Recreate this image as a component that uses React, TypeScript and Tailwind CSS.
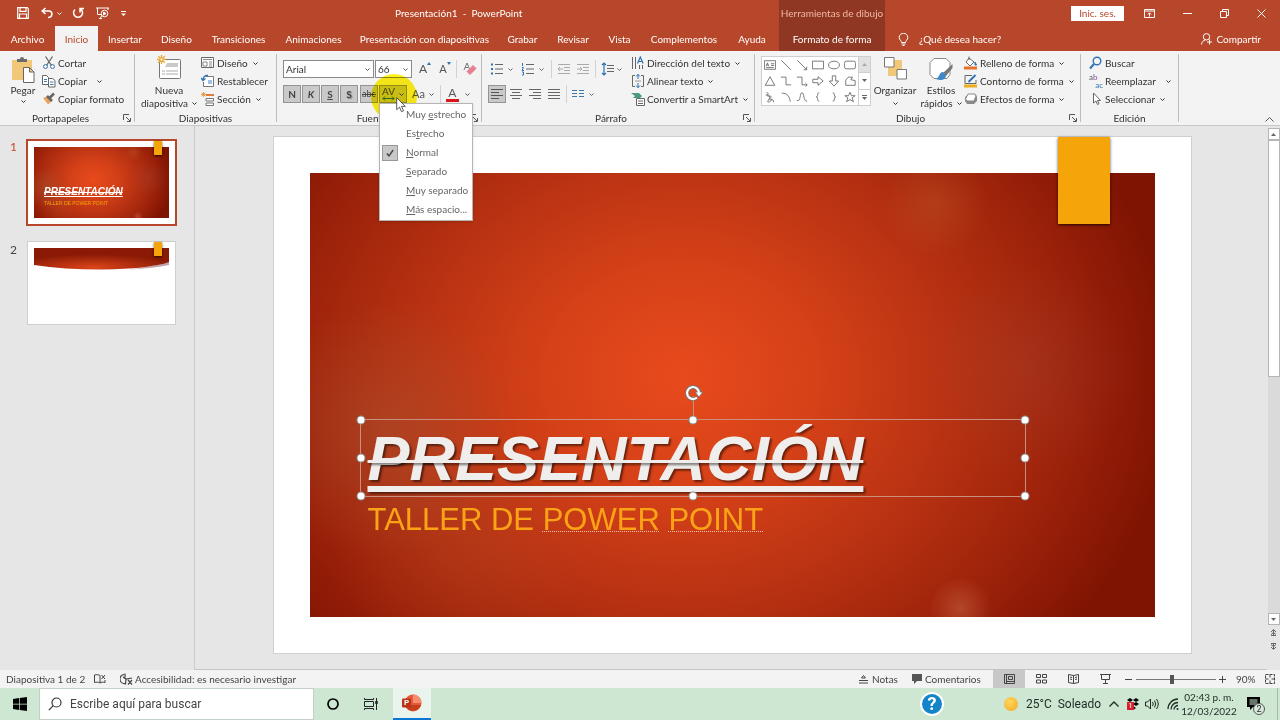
import React from 'react';

interface IconProps {
  children: React.ReactNode;
  size?: string;
  box?: string;
  className?: string;
}

const Icon: React.FC<IconProps> = ({ children, size = 'w-3.5 h-3.5', box = '0 0 14 14', className = '' }) => (
  <svg viewBox={box} className={`${size} shrink-0 ${className}`} fill="none" stroke="currentColor" strokeWidth="1" aria-hidden="true">
    {children}
  </svg>
);

const Chevron = ({ className = '' }: { className?: string }) => (
  <Icon size="w-[5px] h-[5px]" box="0 0 5 5" className={className}>
    <path d="M.5 1.5l2 2 2-2" />
  </Icon>
);

const Launcher = () => (
  <button type="button" title="Más opciones" className="w-3.5 flex justify-center text-[#555]">
    <Icon size="w-2 h-2" box="0 0 8 8">
      <path d="M.5 6V.5H6M3 3l4 4M7.5 4v3.5H4" />
    </Icon>
  </button>
);

const Divider = () => <span className="w-px h-[18px] bg-[#d2d2d2] shrink-0" />;

interface GroupProps {
  title: string;
  width: string;
  launcher?: boolean;
  children: React.ReactNode;
}

const Group: React.FC<GroupProps> = ({ title, width, launcher, children }) => (
  <section aria-label={title} className={`${width} shrink-0 flex flex-col border-r border-[#bdbdbd]`}>
    <div className="flex-1 flex items-start">{children}</div>
    <div className="flex items-center leading-[8px]">
      <span className="flex-1 text-center">{title}</span>
      {launcher && <Launcher />}
    </div>
  </section>
);

interface ItemProps {
  icon: React.ReactNode;
  label: string;
  arrow?: 'near' | 'far';
}

const Item: React.FC<ItemProps> = ({ icon, label, arrow }) => (
  <button type="button" className="flex items-center h-[18px] whitespace-nowrap">
    {icon}
    <span className="ml-0.5">{label}</span>
    {arrow && <Chevron className={arrow === 'far' ? 'ml-2.5' : 'ml-[5px]'} />}
  </button>
);

const TABS = [
  { label: 'Archivo', width: 'w-[55px]' },
  { label: 'Inicio', width: 'w-[43px]' },
  { label: 'Insertar', width: 'w-[54px]' },
  { label: 'Diseño', width: 'w-[49px]' },
  { label: 'Transiciones', width: 'w-[75px]' },
  { label: 'Animaciones', width: 'w-[75px]' },
  { label: 'Presentación con diapositivas', width: 'w-[147px]' },
  { label: 'Grabar', width: 'w-[49px]' },
  { label: 'Revisar', width: 'w-[52px]' },
  { label: 'Vista', width: 'w-[41px]' },
  { label: 'Complementos', width: 'w-[88px]' },
  { label: 'Ayuda', width: 'w-[48px]' },
];

const TitleBar = () => (
  <header className="flex bg-[#b7472a] text-white">
    <div className="w-[779px] shrink-0">
      <div className="flex items-center h-[26px]">
        <div className="flex items-center pl-[17px] w-[114px]">
          <button type="button" title="Guardar">
            <Icon size="w-3 h-3" box="0 0 12 12" className="block">
              <path d="M.7.7h9.6l1 1v9.6H.7zM3 .7v3.6h6V.7M2.500 11.300V7h7v4.3" strokeWidth="1.2" />
            </Icon>
          </button>
          <button type="button" title="Deshacer" className="ml-3">
            <Icon size="w-3 h-3" box="0 0 12 12" className="block">
              <path d="M4.5 1L1.2 4l3.3 3M1.2 4H8c4 0 4 6.5-1 6.5" strokeWidth="1.6" />
            </Icon>
          </button>
          <Chevron className="ml-1" />
          <button type="button" title="Rehacer" className="ml-2.5">
            <Icon size="w-3 h-3" box="0 0 12 12" className="block">
              <path d="M3 2.5A4.5 4.5 0 1 0 8.5 2M8 5.5V1.5h4" strokeWidth="1.5" />
            </Icon>
          </button>
          <button type="button" title="Presentación desde el principio" className="ml-3">
            <Icon size="w-[13px] h-3" box="0 0 13 12" className="block">
              <path d="M0 1h13M1.5 1v6.5H5M12 1v2M4 11.5l2-3M3 11.5h3" />
              <circle cx="8.5" cy="6.5" r="3.3" />
              <path d="M7.5 5v3L10 6.5z" fill="currentColor" />
            </Icon>
          </button>
        </div>
        <button type="button" title="Personalizar barra" className="ml-1.5">
          <Icon size="w-[7px] h-[7px]" box="0 0 7 7">
            <path d="M1 1.5h5" />
            <path d="M1 3.5h5L3.5 6z" fill="currentColor" stroke="none" />
          </Icon>
        </button>
        <h1 className="ml-[268px] whitespace-pre">Presentación1  -  PowerPoint</h1>
      </div>
      <nav className="flex h-[25px]">
        {TABS.map((tab) => (
          <button
            key={tab.label}
            type="button"
            className={`${tab.width} shrink-0 pt-px whitespace-nowrap text-center ${tab.label === 'Inicio' ? 'bg-[#f3f3f3] text-[#b7472a]' : ''}`}
          >
            {tab.label}
          </button>
        ))}
      </nav>
    </div>
    <div className="w-[106px] shrink-0 bg-[#8f3722] flex flex-col whitespace-nowrap">
      <span className="h-[26px] flex items-center justify-center text-[#f3b7a3]">Herramientas de dibujo</span>
      <button type="button" className="h-[25px] pt-px">Formato de forma</button>
    </div>
    <div className="flex-1">
      <div className="flex items-center justify-end h-[26px]">
        <button type="button" className="bg-white text-[#b7472a] w-[53px] h-[15px] leading-[15px]">Inic. ses.</button>
        <button type="button" title="Opciones de la cinta" className="ml-5">
          <Icon size="w-[11px] h-[9px]" box="0 0 11 9" className="block">
            <path d="M.5.5h10v8H.5zM.5 2h10M5.5 7.5V4M3.8 5.5l1.7-1.7 1.7 1.7" />
          </Icon>
        </button>
        <button type="button" title="Minimizar" className="ml-7">
          <Icon size="w-[9px] h-[9px]" box="0 0 9 9" className="block">
            <path d="M0 4.5h9" />
          </Icon>
        </button>
        <button type="button" title="Restaurar" className="ml-7">
          <Icon size="w-[9px] h-[9px]" box="0 0 9 9" className="block">
            <path d="M.5 2.5h6v6h-6zM2.5 2.5v-2h6v6h-2" />
          </Icon>
        </button>
        <button type="button" title="Cerrar" className="ml-7 mr-[14px]">
          <Icon size="w-[9px] h-[9px]" box="0 0 9 9" className="block">
            <path d="M.5.5l8 8M8.5.5l-8 8" />
          </Icon>
        </button>
      </div>
      <div className="flex items-center h-[25px] pt-px pl-[13px] pr-[19px]">
        <Icon size="w-[11px] h-[13px]" box="0 0 11 13">
          <path d="M3.5 9.5C3.5 7.5 1.2 7 1.2 4.5a4.3 4.3 0 0 1 8.6 0C9.8 7 7.5 7.5 7.5 9.5zM3.5 11h4M4.5 12.5h2" />
        </Icon>
        <button type="button" className="ml-2.5">¿Qué desea hacer?</button>
        <button type="button" className="ml-auto flex items-center gap-1">
          <Icon size="w-3 h-3" box="0 0 12 12">
            <circle cx="5.5" cy="3.8" r="3.2" />
            <path d="M.5 11.5C.7 9 2.5 7.2 4.5 7M8.5 6.5v5M6 9h5" />
          </Icon>
          Compartir
        </button>
      </div>
    </div>
  </header>
);

const SPACINGS = [
  ['Muy ', 'e', 'strecho'],
  ['Es', 't', 'recho'],
  ['', 'N', 'ormal'],
  ['', 'S', 'eparado'],
  ['', 'M', 'uy separado'],
  ['', 'M', 'ás espacio...'],
];

const SpacingMenu = () => (
  <ul role="menu" className="absolute z-20 left-0 top-[18px] w-[94px] bg-white border border-[#b5b5b5] py-px shadow-sm text-[#666]">
    {SPACINGS.map(([before, key, after]) => (
      <li key={before + key + after} className="flex items-center h-[19px]">
        <button type="button" role="menuitem" className="flex items-center w-full h-full whitespace-nowrap">
          <span className={`w-4 h-4 ml-0.5 mr-2 shrink-0 flex items-center justify-center ${after === 'ormal' ? 'bg-[#c8c8c8] border border-[#989898] text-[#444]' : ''}`}>
            {after === 'ormal' && (
              <Icon size="w-2 h-2" box="0 0 8 8">
                <path d="M.8 4.5l2.2 2.3L7.2 1" strokeWidth="1.4" />
              </Icon>
            )}
          </span>
          <span>
            {before}
            <u>{key}</u>
            {after}
          </span>
        </button>
      </li>
    ))}
  </ul>
);

const pressed = 'h-[18px] bg-[#c9c9c9] border border-[#949494] text-[#444] flex items-center justify-center';

const ClipboardGroup = () => (
  <Group title="Portapapeles" width="w-[134px]" launcher>
    <button type="button" className="ml-1.5 w-8 flex flex-col items-center leading-[13px]">
      <Icon size="w-6 h-7" box="0 0 24 28" className="mt-0.5 text-[#666]">
        <path d="M1 4h20v20H1z" fill="#f0c878" stroke="none" />
        <path d="M6 6V3h3a2 2 0 0 1 4 0h3v3z" fill="#6b6b6b" stroke="none" />
        <path d="M12.5 11.5h6l4.5 4.5v10.5H12.5zM18.5 11.5V16H23" fill="#fff" />
      </Icon>
      <span>Pegar</span>
      <Chevron className="mt-0.5" />
    </button>
    <div className="flex flex-col ml-[3px]">
      <Item
        label="Cortar"
        icon={
          <Icon>
            <path d="M3.5.5l6 9M10.5.5l-6 9" stroke="#666" strokeWidth="1.3" />
            <circle cx="3.5" cy="10.5" r="2" stroke="#3f78ad" />
            <circle cx="10.5" cy="10.5" r="2" stroke="#3f78ad" />
          </Icon>
        }
      />
      <Item
        label="Copiar"
        arrow="far"
        icon={
          <Icon className="text-[#666]">
            <path d="M.5 1.5h4l2 2v7h-6zM6.5 4.5h4l2.5 2v6.5H6.5z" fill="#fff" />
            <path d="M2 5.5h3M2 7.5h3M8 8h3.5M8 10.5h3.5" stroke="#3f78ad" />
          </Icon>
        }
      />
      <Item
        label="Copiar formato"
        icon={
          <Icon>
            <path d="M1 6l5-2 4 5-4 3.5z" fill="#eea35f" stroke="none" />
            <path d="M5 4l5 5M7.5 6L12 1.5" stroke="#666" strokeWidth="2.6" />
          </Icon>
        }
      />
    </div>
  </Group>
);

const SlidesGroup = () => (
  <Group title="Diapositivas" width="w-[142px]">
    <button type="button" className="ml-1 w-[60px] flex flex-col items-center leading-[13px]">
      <Icon size="w-[26px] h-7" box="0 0 26 28" className="text-[#777]">
        <rect x="3.5" y="5.5" width="21" height="19" rx="1" fill="#fff" />
        <path d="M11 9h11v4H9z" fill="#c9c9c9" stroke="none" />
        <path d="M6 17h3M10 17h12M6 20h3M10 20h12" stroke="#aaa" />
        <path d="M5.5 1v9M1 5.5h9M2.3 2.3l6.4 6.4M8.7 2.3L2.3 8.7" stroke="#e9a93a" strokeWidth="1.3" />
        <circle cx="5.5" cy="5.5" r="1.5" fill="#fff" stroke="#e9a93a" />
      </Icon>
      <span className="mt-0.5">Nueva</span>
      <span className="flex items-center whitespace-nowrap">
        diapositiva <Chevron className="ml-1" />
      </span>
    </button>
    <div className="flex flex-col ml-0.5">
      <Item
        label="Diseño"
        arrow="near"
        icon={
          <Icon className="text-[#666]">
            <path d="M.5 1.5h12v10H.5z" fill="#fff" />
            <path d="M2 3.5h9M2 6h4v4H2zM8 6h3M8 8h3M8 10h3" stroke="#888" />
          </Icon>
        }
      />
      <Item
        label="Restablecer"
        icon={
          <Icon className="text-[#777]">
            <path d="M4.5 2.5h8v10h-10V8" fill="#fff" />
            <path d="M7 6h4v4H7z" fill="#9cc3e6" stroke="none" />
            <path d="M7 1.5C4 1 2 3 2 6M0 4l2 2.5L4.5 4.5" stroke="#2f73b5" strokeWidth="1.3" />
          </Icon>
        }
      />
      <Item
        label="Sección"
        arrow="near"
        icon={
          <Icon className="text-[#777]">
            <path d="M5 3h8" stroke="#e07b39" strokeWidth="2" />
            <path d="M5 6.5h7.5v2.5H5zM5 11h7.5v2.5H5z" fill="#fff" />
            <path d="M2.5 0v5M0 2.5h5M.7.7l3.6 3.6M4.3.7L.7 4.3" stroke="#e9a05a" />
          </Icon>
        }
      />
    </div>
  </Group>
);

const FontGroup = () => (
  <Group title="Fuente" width="w-[205px]" launcher>
    <div className="flex flex-col gap-[7px] pt-1.5 pl-1.5 text-[#555]">
      <div className="flex items-center h-[18px]">
        <label className="relative flex">
          <select aria-label="Fuente" className="appearance-none w-[91px] h-[18px] pl-0.5 bg-white border border-[#8a8a8a] text-[#333]">
            <option>Arial</option>
          </select>
          <Chevron className="absolute right-1 top-[7px]" />
        </label>
        <label className="relative flex ml-px">
          <select aria-label="Tamaño" className="appearance-none w-[37px] h-[18px] pl-0.5 bg-white border border-[#8a8a8a] text-[#333]">
            <option>66</option>
          </select>
          <Chevron className="absolute right-1 top-[7px]" />
        </label>
        <button type="button" title="Aumentar tamaño" className="flex ml-[7px] text-xs leading-[18px]">
          A<Icon size="w-1 h-1" box="0 0 4 4" className="mt-0.5"><path d="M0 3l2-3 2 3z" fill="#2f73b5" stroke="none" /></Icon>
        </button>
        <button type="button" title="Disminuir tamaño" className="flex ml-2 text-[11px] leading-[18px]">
          A<Icon size="w-1 h-1" box="0 0 4 4" className="mt-0.5"><path d="M0 0l2 3 2-3z" fill="#2f73b5" stroke="none" /></Icon>
        </button>
        <span className="ml-[5px] flex"><Divider /></span>
        <button type="button" title="Borrar formato" className="ml-1.5">
          <Icon className="block">
            <path d="M1 8l3-7 2.5 6M2 5.5h3" stroke="#777" />
            <path d="M4 9.5l6-6 3 3-6 6z" fill="#e77e90" stroke="#e77e90" />
          </Icon>
        </button>
      </div>
      <div className="flex items-center h-[18px]">
        <button type="button" className={`${pressed} w-[18px] font-bold`}>N</button>
        <button type="button" className={`${pressed} w-[18px] ml-px font-bold italic`}>K</button>
        <button type="button" className={`${pressed} w-[18px] ml-px font-bold underline`}>S</button>
        <button type="button" className={`${pressed} w-[18px] ml-px font-bold [text-shadow:1px_1px_1px_#777]`}>S</button>
        <button type="button" className={`${pressed} w-[18px] ml-0.5 line-through text-[9px]`}>abc</button>
        <div className="relative ml-px">
          <span className="absolute z-10 -left-2 top-[-11px] w-[46px] h-[46px] rounded-full bg-[#fff01a] mix-blend-multiply pointer-events-none" />
          <button type="button" title="Espacio entre caracteres" className={`${pressed} w-[28px] gap-1`}>
            <span className="flex flex-col items-center leading-[9px]">
              AV
              <Icon size="w-[13px] h-[5px]" box="0 0 13 5"><path d="M1 2.5h11M3 .5l-2 2 2 2M10 .5l2 2-2 2" stroke="#2c6f8f" /></Icon>
            </span>
            <Chevron />
          </button>
          <SpacingMenu />
          <svg viewBox="0 0 10 16" className="absolute z-30 left-[17px] top-3 w-[10px] h-4 pointer-events-none" aria-hidden="true">
            <path d="M.7.7v12l2.8-2.6 2 4.6 2-.9-2-4.4h3.8z" fill="#fff" stroke="#333" strokeWidth=".8" />
          </svg>
        </div>
        <button type="button" className="flex items-center ml-[5px] text-[11px]">
          Aa<Chevron className="ml-1" />
        </button>
        <span className="ml-1.5 flex"><Divider /></span>
        <button type="button" title="Color de fuente" className="flex items-center ml-[5px]">
          <span className="w-[13px] border-b-[3px] border-[#d8161c] text-xs leading-[12px]">A</span>
          <Chevron className="ml-1.5" />
        </button>
      </div>
    </div>
  </Group>
);

const ALIGNMENTS = [
  { title: 'Alinear a la izquierda', d: 'M1 1.5h12M1 4.5h8M1 7.5h12M1 10.5h8' },
  { title: 'Centrar', d: 'M1 1.5h12M3 4.5h8M1 7.5h12M3 10.5h8' },
  { title: 'Alinear a la derecha', d: 'M1 1.5h12M5 4.5h8M1 7.5h12M5 10.5h8' },
  { title: 'Justificar', d: 'M1 1.5h12M1 4.5h12M1 7.5h12M1 10.5h12' },
];

const ParagraphGroup = () => (
  <Group title="Párrafo" width="w-[273px]" launcher>
    <div className="flex flex-col gap-[7px] pt-1.5 pl-1.5 w-[149px] text-[#666]">
      <div className="flex items-center h-[18px]">
        <button type="button" title="Viñetas" className="flex items-center ml-0.5">
          <Icon>
            <path d="M5 2.5h8M5 7h8M5 11.5h8" />
            <path d="M1 2.5h2M1 7h2M1 11.5h2" stroke="#2f73b5" strokeWidth="2" />
          </Icon>
          <Chevron className="ml-1" />
        </button>
        <button type="button" title="Numeración" className="flex items-center ml-2">
          <Icon>
            <path d="M5 2.5h8M5 7h8M5 11.5h8" />
            <path d="M1.5 1v3M1 5.5h1.5L1 8.5h2M1 10h1.5v3H1" stroke="#2f73b5" />
          </Icon>
          <Chevron className="ml-1" />
        </button>
        <span className="ml-[7px] flex"><Divider /></span>
        <button type="button" title="Reducir nivel" className="ml-[5px] text-[#aaa]">
          <Icon className="block"><path d="M1 2.5h12M7 5.5h6M7 8.5h6M1 11.5h12M6 7H1M3 5L1 7l2 2" /></Icon>
        </button>
        <button type="button" title="Aumentar nivel" className="ml-[5px] text-[#aaa]">
          <Icon className="block"><path d="M1 2.5h12M7 5.5h6M7 8.5h6M1 11.5h12M1 7h5M4 5l2 2-2 2" /></Icon>
        </button>
        <span className="ml-[5px] flex"><Divider /></span>
        <button type="button" title="Interlineado" className="flex items-center ml-[5px]">
          <Icon>
            <path d="M6 3.5h7M6 6.5h7M6 9.5h7" />
            <path d="M3 1v12M1 3l2-2 2 2M1 11l2 2 2-2" stroke="#2f73b5" strokeWidth="1.2" />
          </Icon>
          <Chevron className="ml-0.5" />
        </button>
      </div>
      <div className="flex items-center h-[18px]">
        {ALIGNMENTS.map((align, i) => (
          <button
            key={align.title}
            type="button"
            title={align.title}
            className={`w-[18px] h-[18px] mr-px flex items-center justify-center ${i === 0 ? 'bg-[#c9c9c9] border border-[#949494] text-[#555]' : ''}`}
          >
            <Icon size="w-3.5 h-3" box="0 0 14 12"><path d={align.d} /></Icon>
          </button>
        ))}
        <span className="ml-0.5 flex"><Divider /></span>
        <button type="button" title="Columnas" className="flex items-center ml-1">
          <Icon className="text-[#3f78ad]"><path d="M1 3.5h5M1 6.5h5M1 9.5h5M8 3.5h5M8 6.5h5M8 9.5h5" /></Icon>
          <Chevron className="ml-1 text-[#666]" />
        </button>
      </div>
    </div>
    <div className="flex flex-col">
      <Item
        label="Dirección del texto"
        arrow="near"
        icon={
          <Icon className="text-[#666]">
            <path d="M1.5 1v12M4.5 1v12M8.5 9v4M11.5 9v4" />
            <path d="M6.5 7.5l2.8-6.5 2.8 6.5M7.5 5.5h4" stroke="#2f73b5" strokeWidth="1.2" />
          </Icon>
        }
      />
      <Item
        label="Alinear texto"
        arrow="near"
        icon={
          <Icon className="text-[#666]">
            <path d="M4 1.5H1.5v11H4M10 1.5h2.5v11H10" />
            <path d="M4 7h6" stroke="#999" />
            <path d="M7 0v5M5 2.5L7 .5l2 2M7 14V9M5 11.5l2 2 2-2" stroke="#2f73b5" />
          </Icon>
        }
      />
      <Item
        label="Convertir a SmartArt"
        arrow="near"
        icon={
          <Icon className="text-[#666]">
            <path d="M0 1h8l3 3-2 2H2l2-2z" fill="#4c9a80" stroke="none" />
            <path d="M5.5 6.5h8v7h-8z" fill="#fff" />
            <path d="M7 9h5M7 11.5h5" />
          </Icon>
        }
      />
    </div>
  </Group>
);

const SHAPES = [
  'M.5 2h13v10H.5zM2.5 8.5l1.5-4 1.5 4M3 7h2M8 5.5h4M8 7.5h4M2.5 10h9',
  'M1.5 1.5l11 11',
  'M1.5 1.5l11 11M12.5 9v3.5H9',
  'M.5 2.5h13v9H.5z',
  'M7 2.5c8.500 0 8.500 9 0 9s-8.500-9 0-9z',
  'M3 2.5h8q2.500 0 2.500 2.500v4q0 2.500-2.500 2.500H3Q.5 11.500.5 9V5Q.5 2.500 3 2.500z',
  'M7 2l5.5 10h-11z',
  'M1 2.5h6v9h6',
  'M1 2.5h6v9h6M11 9.5l2 2-2 2',
  'M1 5h6V2l6 5-6 5V9H1z',
  'M5 1h4v6h3.5L7 13 1.5 7H5z',
  'M2 12V6l3-3.5h5L8 5.5l5 1V12z',
  'M3 2c5 0-2 4 2 4s4 0 2 3 5-1 4 4M2 5c4-2 6 2 3 6s5 1 4-2',
  'M2 2.5c7 0 9 4 10 10',
  'M1 11c5 2 3-9 6-9s1 10 6 10',
  'M8.5 2C5 2 8 7 5 7c3 0 0 5 3.5 5',
  'M5.5 2C9 2 6 7 9 7c-3 0 0 5-3.5 5',
  'M7 1.5l1.7 4h4.3L9.5 8l1.5 4.5-4-2.5-4 2.5L4.5 8 1 5.5h4.3z',
];

const DrawingGroup = () => (
  <Group title="Dibujo" width="w-[326px]" launcher>
    <div className="flex ml-1.5 mt-0.5 bg-white border border-[#cfcfcf] text-[#666]">
      <div className="grid grid-cols-6">
        {SHAPES.map((d) => (
          <button key={d} type="button" title="Forma" className="w-4 h-4 flex items-center justify-center">
            <Icon size="w-3 h-3"><path d={d} /></Icon>
          </button>
        ))}
      </div>
      <div className="flex flex-col w-3 border-l border-[#cfcfcf] divide-y divide-[#cfcfcf]">
        <button type="button" title="Anterior" className="flex-1 flex items-center justify-center bg-[#e1e1e1] text-[#aaa]">
          <Icon size="w-[5px] h-[3px]" box="0 0 5 3"><path d="M0 3L2.5 0 5 3z" fill="currentColor" stroke="none" /></Icon>
        </button>
        <button type="button" title="Siguiente" className="flex-1 flex items-center justify-center">
          <Icon size="w-[5px] h-[3px]" box="0 0 5 3"><path d="M0 0l2.5 3L5 0z" fill="currentColor" stroke="none" /></Icon>
        </button>
        <button type="button" title="Más formas" className="flex-1 flex items-center justify-center">
          <Icon size="w-[5px] h-[5px]" box="0 0 5 5">
            <path d="M0 .5h5" />
            <path d="M0 2l2.5 3L5 2z" fill="currentColor" stroke="none" />
          </Icon>
        </button>
      </div>
    </div>
    <button type="button" className="w-[48px] flex flex-col items-center leading-[13px]">
      <Icon size="w-[23px] h-[26px]" box="0 0 23 26" className="mt-0.5 mb-0.5 text-[#777]">
        <path d="M4 4h14v16H4z" fill="#f0c878" stroke="none" />
        <path d="M.5 1.5h9.500V11H.5zM13 13.5h9.500V23H13z" fill="#fff" />
      </Icon>
      <span>Organizar</span>
      <Chevron className="mt-1" />
    </button>
    <button type="button" className="w-[44px] flex flex-col items-center leading-[13px]">
      <Icon size="w-[26px] h-[26px]" box="0 0 26 26" className="mt-0.5 mb-0.5 text-[#888]">
        <path d="M6 2.5h12l4 4v12l-3 4H6l-4-4v-12z" fill="#fff" />
        <path d="M24.5 8l-9.5 9 3 3 6.5-8z" fill="#777" stroke="none" />
        <path d="M15 16c-4 0-3 5-7 7 5 2 10 1 10-4z" fill="#3f87c9" stroke="none" />
      </Icon>
      <span>Estilos</span>
      <span className="flex items-center whitespace-nowrap">
        rápidos <Chevron className="ml-1" />
      </span>
    </button>
    <div className="flex flex-col ml-px">
      <Item
        label="Relleno de forma"
        arrow="near"
        icon={
          <Icon className="text-[#666]">
            <path d="M5 2l5 4-4 4-4-4zM5 4V.5" fill="#fff" />
            <path d="M11 6l1.5 3H11z" fill="#2f73b5" stroke="#2f73b5" />
            <path d="M0 12h13" stroke="#e8702a" strokeWidth="3" />
          </Icon>
        }
      />
      <Item
        label="Contorno de forma"
        arrow="near"
        icon={
          <Icon className="text-[#666]">
            <path d="M8 1.5H1v8h11V6" />
            <path d="M4.5 8l7-7" stroke="#2f73b5" strokeWidth="2" />
            <path d="M0 12h13" stroke="#e9ad1e" strokeWidth="3" />
          </Icon>
        }
      />
      <Item
        label="Efectos de forma"
        arrow="near"
        icon={
          <Icon className="text-[#888]">
            <path d="M3 12l-2-3V5l3-2h8l1 2v4l-3 3z" fill="#8b8b8b" stroke="none" />
            <path d="M4 2h7l1 2-2 5H3L1.5 7z" fill="#fff" />
          </Icon>
        }
      />
    </div>
  </Group>
);

const EditingGroup = () => (
  <Group title="Edición" width="w-[98px]">
    <div className="flex flex-col ml-2">
      <Item
        label="Buscar"
        icon={
          <Icon className="text-[#2f73b5]">
            <circle cx="8" cy="5" r="3.8" strokeWidth="1.4" />
            <path d="M5 8l-4 4.5" strokeWidth="2" />
          </Icon>
        }
      />
      <Item
        label="Reemplazar"
        arrow="far"
        icon={
          <span className="w-3.5 flex flex-col text-[8px] leading-[8px] text-[#555] text-left">
            <span>a<span className="text-[#8a4fa8]">b</span></span>
            <span className="text-right text-[#2f73b5]">ac</span>
          </span>
        }
      />
      <Item
        label="Seleccionar"
        arrow="near"
        icon={
          <Icon className="text-[#666]">
            <path d="M4.5 1v10l2.5-2 1.5 3.5 1.5-.8-1.5-3.2h3z" fill="#fff" />
          </Icon>
        }
      />
    </div>
  </Group>
);

const Ribbon = () => (
  <div className="flex bg-[#f3f3f3] border-b border-[#c8c8c8] pt-[3px] pb-[3px] pl-px h-[75px] text-[#333]">
    <ClipboardGroup />
    <SlidesGroup />
    <FontGroup />
    <ParagraphGroup />
    <DrawingGroup />
    <EditingGroup />
    <div className="flex-1 flex items-end justify-end pr-1.5">
      <button type="button" title="Contraer la cinta">
        <Icon size="w-[9px] h-[5px]" box="0 0 9 5" className="block text-[#555]"><path d="M.5 4.5l4-4 4 4" /></Icon>
      </button>
    </div>
  </div>
);

const background =
  'bg-[radial-gradient(circle_at_77%_98%,#f0a07848_0,#f0a07800_4%),radial-gradient(circle_at_74%_7%,#d8884430_0,#d8884400_7%),radial-gradient(circle_at_85%_44%,#a0585030_0,#a0585000_14%),radial-gradient(circle_at_9%_58%,#a8603c66_0,#a8603c00_16%),radial-gradient(circle_at_18%_84%,#b8502840_0,#b8502800_16%),radial-gradient(ellipse_58%_92%_at_44%_46%,#e84a1c_0,#d54118_28%,#b83212_55%,#9c220a_80%,#801402_100%)]';

const Bookmark = () => <span className="absolute top-0 left-[85.5%] w-[5.7%] h-[16.8%] bg-[#f5a50a] shadow-sm shadow-black/60" />;

const Thumbnails = () => (
  <aside className="w-[195px] shrink-0 border-r border-[#cacaca] pl-2.5 pt-[13px] flex flex-col gap-4 text-xs">
    <button type="button" className="flex items-start">
      <span className="w-4 text-left text-[#c8472a]">1</span>
      <span className="border-2 border-[#b7472a] w-[151px] block">
        <span className="relative block bg-white aspect-video p-1.5">
          <span className={`flex flex-col justify-end w-full h-full pl-2.5 pb-3 text-left font-['Liberation_Sans',Arial,sans-serif] ${background}`}>
            <span className="text-[10px] leading-[12px] font-bold italic text-white underline">
              <s>PRESENTACIÓN</s>
            </span>
            <span className="mt-0.5 text-[5px] leading-[6px] text-[#f5a50a]">TALLER DE POWER POINT</span>
          </span>
          <Bookmark />
        </span>
      </span>
    </button>
    <button type="button" className="flex items-start">
      <span className="w-[18px] text-left text-[#444]">2</span>
      <span className="relative block w-[147px] bg-white outline outline-[#cfcfcf] aspect-video p-1.5">
        <svg viewBox="0 0 135 22" className="w-full block" aria-hidden="true">
          <defs>
            <radialGradient id="wave" cx=".44" cy=".9" r=".6">
              <stop offset="0" stopColor="#dc4419" />
              <stop offset="1" stopColor="#8a1a05" />
            </radialGradient>
          </defs>
          <path d="M95 21.5Q120 19 135 13v4Q120 20 95 21.5z" fill="#c0a0a8" />
          <path d="M0 0h135v14Q115 21 68 21.5 30 21.5 0 17z" fill="url(#wave)" />
        </svg>
        <Bookmark />
      </span>
    </button>
  </aside>
);

const HANDLES = [
  'left-0 top-0',
  'left-1/2 top-0',
  'left-full top-0',
  'left-0 top-1/2',
  'left-full top-1/2',
  'left-0 top-full',
  'left-1/2 top-full',
  'left-full top-full',
];

const Slide = () => (
  <div className="relative w-[917px] aspect-video shrink-0 bg-white outline outline-[#d0d0d0] p-9">
    <div className={`w-full h-full ${background}`} />
    <Bookmark />
    <div className="absolute left-[86px] top-[282px] w-[666px] font-['Liberation_Sans',Arial,sans-serif]">
      <div className="relative h-[78px] border border-[#c9907f] pl-[7px]">
        <h2 className="text-[63px] leading-[76px] font-bold italic text-[#efeeec] whitespace-nowrap underline decoration-[6px] underline-offset-[6px] [text-decoration-skip-ink:none] [text-shadow:2px_2px_2px_#00000080]">
          <span className="line-through decoration-[3px]">PRESENTACIÓN</span>
        </h2>
        <span className="absolute left-1/2 -top-6 w-px h-6 bg-[#c9907f]" />
        {HANDLES.map((place) => (
          <span key={place} className={`absolute ${place} w-[7px] h-[7px] -translate-x-1/2 -translate-y-1/2 rounded-full bg-white ring-1 ring-[#8a8a8a]`} />
        ))}
        <svg viewBox="0 0 20 18" className="absolute left-1/2 -top-9 w-5 h-[18px] -translate-x-1/2" fill="none" aria-hidden="true">
          <path d="M16 9a6 6 0 1 0-2 4.5" stroke="#777" strokeWidth="4" />
          <path d="M12 8h8l-4 5z" fill="#fff" stroke="#777" />
          <path d="M16 9a6 6 0 1 0-2 4.5" stroke="#fff" strokeWidth="2.2" />
        </svg>
      </div>
      <p className="pl-2 pt-[5px] text-[31px] leading-[36px] text-[#fba316] whitespace-nowrap">
        TALLER DE <span className="underline decoration-dotted decoration-1 decoration-[#f6c0b0] underline-offset-1">POWER</span>{' '}
        <span className="underline decoration-dotted decoration-1 decoration-[#f6c0b0] underline-offset-1">POINT</span>
      </p>
    </div>
  </div>
);

const ScrollBar = () => (
  <div className="w-[13px] shrink-0 flex flex-col items-center pt-0.5 pb-5 text-[#666]">
    <button type="button" title="Subir" className="w-3 h-3 bg-white border border-[#b5b5b5] flex items-center justify-center">
      <Icon size="w-[5px] h-[3px]" box="0 0 5 3"><path d="M0 3L2.5 0 5 3z" fill="currentColor" stroke="none" /></Icon>
    </button>
    <div className="flex-1 w-3 bg-[#dadada]">
      <div className="h-1/2 bg-white border border-[#b5b5b5]" />
    </div>
    <button type="button" title="Bajar" className="w-3 h-3 bg-white border border-[#b5b5b5] flex items-center justify-center">
      <Icon size="w-[5px] h-[3px]" box="0 0 5 3"><path d="M0 0l2.5 3L5 0z" fill="currentColor" stroke="none" /></Icon>
    </button>
    <button type="button" title="Diapositiva anterior" className="mt-1">
      <Icon size="w-[7px] h-[7px]" box="0 0 7 7" className="block"><path d="M1 3l2.5-2.5L6 3M3.5 1v5M1 5.5l2.5-2 2.5 2M1 6.5h5" /></Icon>
    </button>
    <button type="button" title="Diapositiva siguiente" className="mt-[7px]">
      <Icon size="w-[7px] h-[7px]" box="0 0 7 7" className="block"><path d="M1 4l2.5 2.5L6 4M3.5 1v5M1 1.5l2.5 2 2.5-2M1 .5h5" /></Icon>
    </button>
  </div>
);

const StatusBar = () => (
  <footer className="flex items-center h-[18px] bg-[#f3f3f3] pl-1.5 pr-[5px] text-[#444] whitespace-nowrap">
    <span className="w-[88px]">Diapositiva 1 de 2</span>
    <Icon size="w-3 h-2.5" box="0 0 12 10">
      <path d="M6 1.5C4.5.5 2.5.5.5 1v7.5c2-.5 4-.5 5.5.5M6 1.5V9c1-1 3-1 5-.5V6M7.5 1l3.5 4M11 1L7.5 5" />
    </Icon>
    <button type="button" className="ml-3.5 flex items-center gap-0.5">
      <Icon size="w-[13px] h-3" box="0 0 13 12">
        <path d="M4 1.5a4.5 4.5 0 0 0 1 9M5 .5v4M3 4l3 2 6-1M6 6l-.5 5.5M8 7l4 4.5M12 7l-4 4.5" strokeWidth="1.2" />
      </Icon>
      Accesibilidad: es necesario investigar
    </button>
    <div className="ml-auto flex items-center">
      <button type="button" className="w-[53px] flex items-center gap-1">
        <Icon size="w-[9px] h-[9px]" box="0 0 9 9"><path d="M0 5.5h9M0 8h9M2.5 3l2-2.5 2 2.5z" /></Icon>
        Notas
      </button>
      <button type="button" className="w-[81px] flex items-center gap-[3px]">
        <Icon size="w-2.5 h-2.5" box="0 0 10 10"><path d="M0 0h10v7H5L2 10V7H0z" fill="#555" stroke="none" /></Icon>
        Comentarios
      </button>
      <button type="button" title="Normal" className="w-8 h-[18px] bg-[#c8c8c8] flex items-center justify-center">
        <Icon size="w-[11px] h-2.5" box="0 0 11 10"><path d="M.5.5h10v9H.5zM2.5.5v9M2.5 7.5h8M4.5 2.5h4v3h-4z" /></Icon>
      </button>
      <button type="button" title="Clasificador" className="w-8 flex justify-center">
        <Icon size="w-[11px] h-2.5" box="0 0 11 10"><path d="M.5.5h4v3h-4zM6.5.5h4v3h-4zM.5 6h4v3h-4zM6.5 6h4v3h-4z" /></Icon>
      </button>
      <button type="button" title="Lectura" className="w-8 flex justify-center">
        <Icon size="w-[11px] h-2.5" box="0 0 11 10"><path d="M5.5 1.5L.5.5v8l5 1 5-1v-8zM5.5 1.5v8M2 3l2 .5M2 5l2 .5M7 3.5L9 3M7 5.5L9 5" /></Icon>
      </button>
      <button type="button" title="Presentación" className="w-8 flex justify-center">
        <Icon size="w-[11px] h-2.5" box="0 0 11 10"><path d="M0 .5h11M1.5.5v5h8v-5M5.5 5.5v4M3 9.5h5" /></Icon>
      </button>
      <button type="button" title="Alejar" className="ml-1">
        <Icon size="w-[7px] h-[7px]" box="0 0 7 7" className="block"><path d="M0 3.5h7" /></Icon>
      </button>
      <input
        type="range"
        aria-label="Zoom"
        defaultValue={45}
        className="ml-1 w-20 h-[9px] appearance-none bg-[linear-gradient(#777,#777)] bg-[length:100%_1px] bg-center bg-no-repeat [&::-webkit-slider-thumb]:appearance-none [&::-webkit-slider-thumb]:w-1 [&::-webkit-slider-thumb]:h-[9px] [&::-webkit-slider-thumb]:bg-[#555]"
      />
      <button type="button" title="Acercar" className="ml-[3px]">
        <Icon size="w-[7px] h-[7px]" box="0 0 7 7" className="block"><path d="M0 3.5h7M3.5 0v7" /></Icon>
      </button>
      <span className="ml-2.5 w-[29px]">90%</span>
      <button type="button" title="Ajustar a la ventana">
        <Icon size="w-2.5 h-2.5" box="0 0 10 10" className="block">
          <path d="M.5.5h9v9h-9zM5 1v2.5M5 9V6.5M1 5h2.5M9 5H6.5" strokeDasharray="3 1" />
        </Icon>
      </button>
    </div>
  </footer>
);

const TaskBar = () => (
  <div className="flex items-center h-8 bg-[#cde7d3] font-['Roboto','Noto_Sans',sans-serif] text-xs text-[#1f2a24] whitespace-nowrap">
    <button type="button" title="Inicio" className="w-[39px] flex justify-center text-black">
      <Icon size="w-3.5 h-3.5">
        <path d="M0 2l6-.9V6.7H0zM6.7 1L14 0v6.7H6.7zM0 7.4h6V13l-6-.9zM6.7 7.4H14V14l-7.3-1z" fill="currentColor" stroke="none" />
      </Icon>
    </button>
    <label className="w-[275px] h-full bg-white border border-[#c4cfc6] flex items-center pl-2 gap-2">
      <Icon size="w-3.5 h-3.5" className="text-[#333]">
        <circle cx="8.5" cy="5.5" r="4.5" strokeWidth="1.2" />
        <path d="M5.3 8.7L.8 13.2" strokeWidth="1.2" />
      </Icon>
      <input type="text" placeholder="Escribe aquí para buscar" aria-label="Buscar" className="flex-1 min-w-0 bg-transparent outline-none placeholder:text-[#444]" />
    </label>
    <button type="button" title="Cortana" className="w-[38px] flex justify-center text-black">
      <Icon size="w-3 h-3" box="0 0 12 12"><circle cx="6" cy="6" r="5" strokeWidth="1.7" /></Icon>
    </button>
    <button type="button" title="Vista de tareas" className="w-[38px] flex justify-center text-[#222]">
      <Icon size="w-3.5 h-3.5">
        <path d="M.5 1v1.5h9V1M.5 13v-1.5h9V13M.5 4.5h9v5h-9zM12.5 1v12" />
        <path d="M12.5 4v3" strokeWidth="2.5" />
      </Icon>
    </button>
    <button type="button" title="PowerPoint" className="ml-[3px] w-[38px] h-full bg-[#e9f5ec] border-b-2 border-[#0c76d3] flex items-center justify-center">
      <span className="relative block">
        <Icon size="w-5 h-[18px]" box="0 0 20 18" className="block">
          <circle cx="11" cy="9" r="8.5" fill="#e5593a" stroke="none" />
          <path d="M11 .5A8.5 8.5 0 0 1 19.5 9H11z" fill="#f58e6f" stroke="none" />
          <path d="M3 11h16A8.5 8.5 0 0 1 3 11z" fill="#c43e1c" stroke="none" />
          <rect x="0" y="4.5" width="9" height="9" rx="1" fill="#b83418" stroke="none" />
        </Icon>
        <span className="absolute left-0.5 top-1 text-[8px] leading-[10px] font-bold text-white">P</span>
      </span>
    </button>
    <div className="ml-auto flex items-center">
      <button type="button" title="Ayuda" className="w-6 h-6 mr-[60px] rounded-full border-2 border-white bg-[#1284c7] text-white text-lg leading-[20px] font-bold">?</button>
      <span className="w-3.5 h-3.5 rounded-full bg-[radial-gradient(circle_at_40%_35%,#ffd75a,#f5a623)]" />
      <span className="ml-2 w-[79px] whitespace-pre">25°C  Soleado</span>
      <button type="button" title="Iconos ocultos" className="ml-1">
        <Icon size="w-2.5 h-1.5" box="0 0 10 6" className="block"><path d="M.5 5.5l4.5-4.5 4.5 4.5" strokeWidth="1.3" /></Icon>
      </button>
      <span className="relative ml-2 w-3">
        <Icon size="w-3 h-3" box="0 0 12 12" className="block text-black">
          <path d="M3 0l3 2-3 2-3-2zM9 0l3 2-3 2-3-2zM3 4l3 2-3 2-3-2zM9 4l3 2-3 2-3-2zM6 8l3 2-3 2-3-2z" fill="currentColor" stroke="none" />
        </Icon>
        <span className="absolute left-0 top-1 w-[7px] h-2 bg-[#d3202c] text-white text-[8px] leading-[8px] text-center">1</span>
      </span>
      <Icon size="w-3.5 h-3" box="0 0 14 12" className="ml-1.5">
        <path d="M.5 4v4h2l3 3V1l-3 3zM7.5 4q1.5 2 0 4M9.5 2.5q2.5 3.5 0 7M11.5 1q3.5 5 0 10" />
      </Icon>
      <Icon size="w-3 h-3" box="0 0 12 12" className="ml-2">
        <path d="M1 11C1 5.5 5.5 1 11 1M4 11.5c0-4 3-7 7-7M7 11.5c0-2 2-4 4-4" strokeWidth="1.3" />
        <circle cx="10.5" cy="11" r="1" fill="currentColor" stroke="none" />
      </Icon>
      <div className="w-[56px] ml-0.5 flex flex-col items-center font-['Lato','Noto_Sans',sans-serif] text-[10px] leading-[14px]">
        <span>02:43 p. m.</span>
        <span>12/03/2022</span>
      </div>
      <button type="button" title="Notificaciones" className="relative ml-2.5">
        <Icon size="w-3.5 h-3.5" className="block text-black">
          <path d="M0 0h13v10H6l-3 3v-3H0z" fill="currentColor" stroke="none" />
          <path d="M2.5 3h8M2.5 5h8M2.5 7h8" stroke="#cde7d3" />
        </Icon>
        <span className="absolute left-[6px] top-[6px] w-3 h-3 rounded-full bg-[#d9e8dc] border border-[#555] text-[9px] leading-[10px]">2</span>
      </button>
      <span className="ml-4 mr-0.5 w-px h-8 bg-[#a5bcaa]" />
    </div>
  </div>
);

const App = () => (
  <div className="min-h-screen flex flex-col overflow-hidden bg-[#e6e6e6] font-['Lato','Noto_Sans',sans-serif] text-[10px]">
    <TitleBar />
    <Ribbon />
    <div className="flex-1 flex">
      <Thumbnails />
      <main className="flex-1 min-w-0 flex justify-center items-start pt-[11px] pl-0.5 border-b border-[#c4c4c4]">
        <Slide />
      </main>
      <ScrollBar />
    </div>
    <StatusBar />
    <TaskBar />
  </div>
);

export default App;
